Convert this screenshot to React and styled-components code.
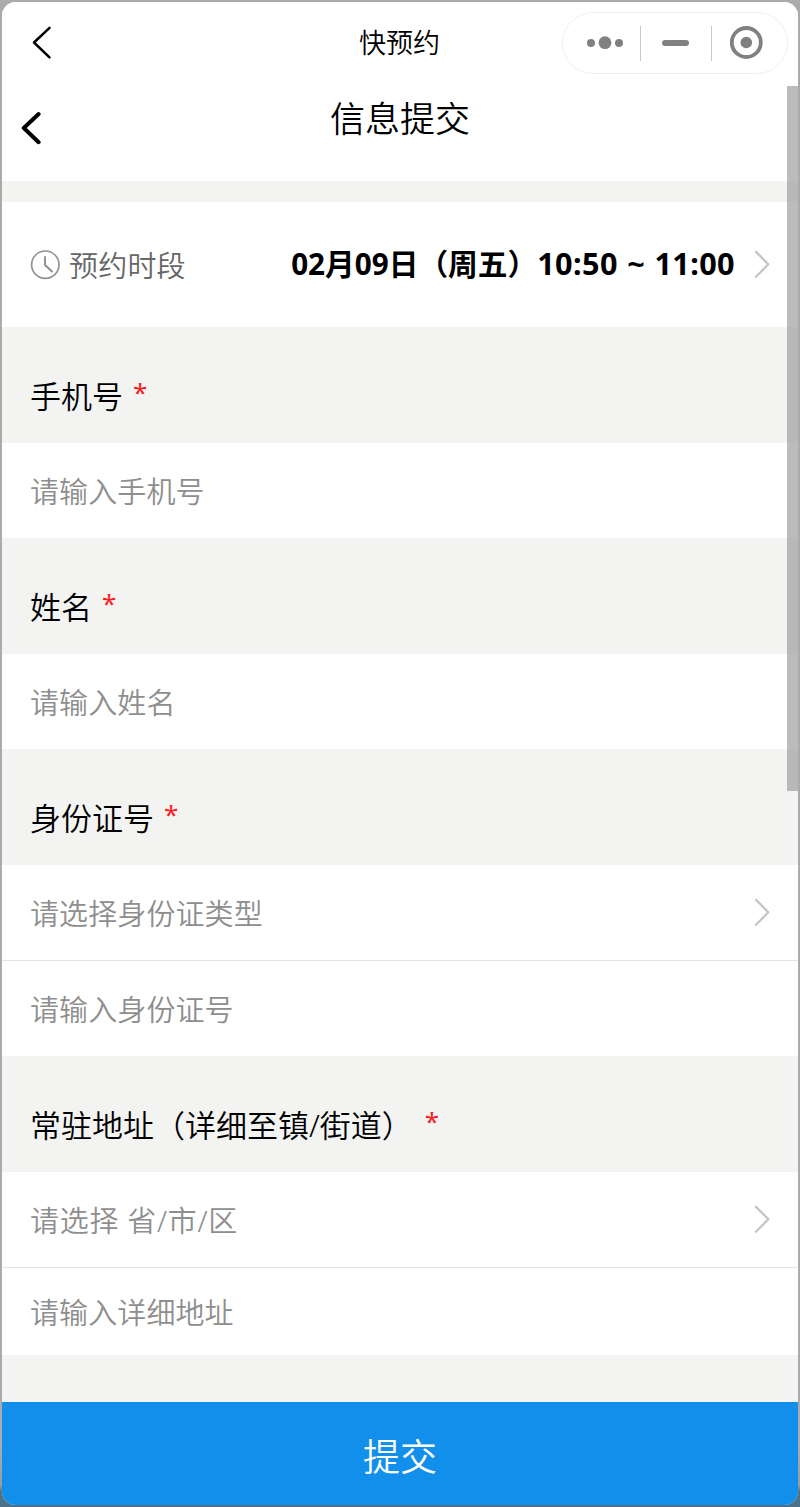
import React from 'react'
import styled, { createGlobalStyle } from 'styled-components'

const fields = [
    {
        id: 'phone',
        label: '手机号',
        rows: [{ text: '请输入手机号' }],
    },
    {
        id: 'name',
        label: '姓名',
        rows: [{ text: '请输入姓名' }],
    },
    {
        id: 'idcard',
        label: '身份证号',
        rows: [{ text: '请选择身份证类型', select: true }, { text: '请输入身份证号' }],
    },
    {
        id: 'address',
        label: '常驻地址（详细至镇/街道）',
        gap: 12,
        rows: [{ text: '请选择 省/市/区', select: true, spacing: 0.7 }, { text: '请输入详细地址', height: 87 }],
    },
]

function Arrow() {
    return (
        <svg width="18" height="30" viewBox="0 0 18 30" fill="none" stroke="#c4c4c4" strokeWidth="2.3" strokeLinecap="round" strokeLinejoin="round">
            <path d="M3 1.8 15.3 14.3 3 26.8" />
        </svg>
    )
}

function Capsule() {
    return (
        <CapsuleStyled>
            <CapsuleItem>
                <svg width="38" height="14" viewBox="0 0 38 14" fill="#808080">
                    <circle cx="5" cy="7" r="4" />
                    <circle cx="19" cy="6.7" r="6.4" />
                    <circle cx="33" cy="7" r="4" />
                </svg>
            </CapsuleItem>
            <Divider />
            <CapsuleItem>
                <Minus />
            </CapsuleItem>
            <Divider />
            <CapsuleItem>
                <svg width="34" height="34" viewBox="0 0 34 34" fill="none">
                    <circle cx="16.3" cy="16.5" r="14.5" stroke="#808080" strokeWidth="3.8" />
                    <circle cx="16.3" cy="16.5" r="5.8" fill="#808080" />
                </svg>
            </CapsuleItem>
        </CapsuleStyled>
    )
}

function Field({ label, gap, rows }) {
    return (
        <>
            <Label>
                {label}
                <Required $gap={gap}>*</Required>
            </Label>
            {rows.map((row) => (
                <Row key={row.text} $height={row.height}>
                    <Placeholder $spacing={row.spacing}>{row.text}</Placeholder>
                    {row.select && <Arrow />}
                </Row>
            ))}
        </>
    )
}

function App() {
    return (
        <>
            <GlobalStyle />
            <Desktop>
                <Phone>
                    <NavBar>
                        <svg width="22" height="34" viewBox="0 0 22 34" fill="none" stroke="#000" strokeWidth="2.5" strokeLinecap="round" strokeLinejoin="round">
                            <path d="M18.5 1.8 3 16.5 18.5 31.3" />
                        </svg>
                        <AppName>快预约</AppName>
                        <Capsule />
                    </NavBar>
                    <PageHeader>
                        <svg width="22" height="34" viewBox="0 0 22 34" fill="none" stroke="#000" strokeWidth="4" strokeLinecap="round" strokeLinejoin="round">
                            <path d="M18.6 3 3.8 17 18.6 31.2" />
                        </svg>
                        <PageTitle>信息提交</PageTitle>
                    </PageHeader>
                    <Period>
                        <svg width="30" height="30" viewBox="0 0 30 30" fill="none" stroke="#929292" strokeWidth="1.7" strokeLinecap="round">
                            <circle cx="15.3" cy="14.7" r="13.7" />
                            <path d="M15 7v8l7 6.6" strokeWidth="2" />
                        </svg>
                        <PeriodName>预约时段</PeriodName>
                        <PeriodValue>
                            02月09日（周五）<Time>10:50 ~ 11:00</Time>
                        </PeriodValue>
                        <Arrow />
                    </Period>
                    {fields.map((field) => (
                        <Field key={field.id} label={field.label} gap={field.gap} rows={field.rows} />
                    ))}
                    <Submit>提交</Submit>
                    <ScrollThumb />
                </Phone>
            </Desktop>
        </>
    )
}

const GlobalStyle = createGlobalStyle`
    * {
        box-sizing: border-box;
    }
    body {
        margin: 0;
        font-family: "Noto Sans", "Noto Sans CJK SC", sans-serif;
        font-weight: 350;
    }
    svg {
        display: block;
        flex-shrink: 0;
    }
`;

const Desktop = styled.div`
    height: 1507px;
    padding: 2px;
    background: linear-gradient(#ababab 0, #a9abad 1450px, #9a9da0 1485px, #4d7289 1492px);
`;

const Phone = styled.div`
    position: relative;
    display: flex;
    flex-direction: column;
    height: 1503px;
    border-radius: 14px;
    overflow: hidden;
    background: #f3f3f2;
    color: #000;
`;

const NavBar = styled.div`
    display: grid;
    grid-template-columns: 226px 1fr 226px;
    align-items: center;
    height: 84px;
    padding: 0 10px 2px 29px;
    background: #fff;
`;

const AppName = styled.div`
    padding-right: 20px;
    text-align: center;
    font-size: 27px;
    line-height: 40px;
`;

const CapsuleStyled = styled.div`
    display: flex;
    align-items: center;
    width: 226px;
    height: 62px;
    padding: 0 5px 0 7px;
    border: 1.5px solid #efefef;
    border-radius: 31px;
`;

const CapsuleItem = styled.div`
    flex: 1;
    display: flex;
    justify-content: center;
`;

const Divider = styled.div`
    width: 1px;
    height: 35px;
    background: #c8c8c8;
`;

const Minus = styled.div`
    width: 27px;
    height: 6px;
    margin-right: 1px;
    border-radius: 3px;
    background: #808080;
`;

const PageHeader = styled.div`
    display: grid;
    grid-template-columns: 22px 1fr 22px;
    height: 95px;
    padding: 25px 18px 0;
    background: #fff;
`;

const PageTitle = styled.div`
    margin-top: -18px;
    text-align: center;
    font-size: 35px;
    line-height: 52px;
`;

const Period = styled.div`
    display: flex;
    align-items: center;
    height: 125px;
    margin-top: 21px;
    padding: 0 27px 0 28px;
    background: #fff;
`;

const PeriodName = styled.div`
    margin-left: 9px;
    padding-bottom: 2px;
    font-size: 29px;
    letter-spacing: 0.2px;
    color: #666;
`;

const PeriodValue = styled.div`
    margin: 0 18px 0 auto;
    padding-bottom: 4px;
    font-size: 29.7px;
    font-weight: 700;
    white-space: nowrap;
`;

const Time = styled.span`
    font-size: 30.6px;
    letter-spacing: 0.4px;
    word-spacing: 1px;
`;

const Label = styled.div`
    display: flex;
    align-items: center;
    height: 116px;
    padding: 19px 0 0 28px;
    font-size: 31px;
`;

const Required = styled.span`
    margin-left: ${(props) => props.$gap || 10}px;
    padding-bottom: 5px;
    font-size: 26px;
    font-weight: 400;
    color: #fb1b22;
`;

const Row = styled.div`
    display: flex;
    align-items: center;
    justify-content: space-between;
    height: ${(props) => props.$height || 95}px;
    padding: 0 27px 0 28px;
    background: #fff;

    & + & {
        margin-top: 1px;
        box-shadow: 0 -1px 0 #e3e3e3;
    }
`;

const Placeholder = styled.span`
    padding-bottom: 2px;
    font-size: 29px;
    letter-spacing: ${(props) => props.$spacing || 0.1}px;
    color: #8e8e8e;
`;

const Submit = styled.div`
    display: flex;
    align-items: center;
    justify-content: center;
    height: 103px;
    margin-top: auto;
    padding-top: 3px;
    background: #128eeb;
    color: #fff;
    font-size: 37px;
`;

/* floats over the page on the right edge */
const ScrollThumb = styled.div`
    position: absolute;
    top: 84px;
    right: 0;
    width: 11px;
    height: 705px;
    background: rgba(150, 154, 152, 0.65);
`;

export default App
